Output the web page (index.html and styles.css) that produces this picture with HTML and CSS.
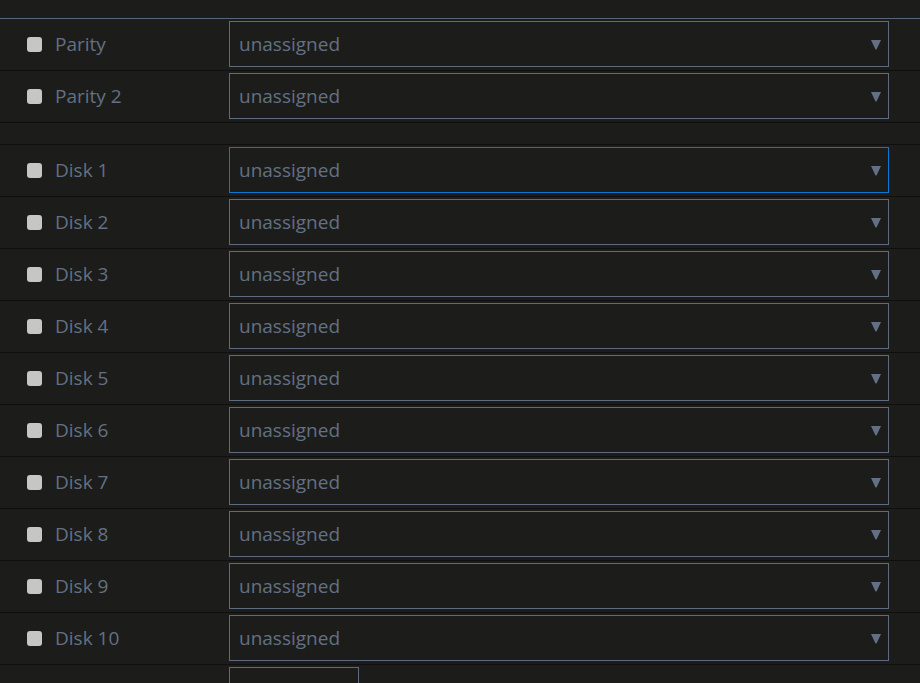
FILE: index.html
```html
<!DOCTYPE html>
<html lang="en">
<head>
    <meta charset="UTF-8">
    <title>Array Devices</title>
    <link rel="stylesheet" href="styles.css">
</head>
<body>
    <div class="devices">
        <div class="devices-head"></div>

        <div class="row">
            <div class="label"><span class="check"></span>Parity</div>
            <div class="select"><span>unassigned</span><svg class="arrow" width="10" height="10" viewBox="0 0 10 10"><polygon points="0,0 10,0 5.5,9.5 4.5,9.5"/></svg></div>
        </div>
        <div class="row">
            <div class="label"><span class="check"></span>Parity 2</div>
            <div class="select"><span>unassigned</span><svg class="arrow" width="10" height="10" viewBox="0 0 10 10"><polygon points="0,0 10,0 5.5,9.5 4.5,9.5"/></svg></div>
        </div>

        <div class="row spacer"></div>

        <div class="row">
            <div class="label"><span class="check"></span>Disk 1</div>
            <div class="select focused"><span>unassigned</span><svg class="arrow" width="10" height="10" viewBox="0 0 10 10"><polygon points="0,0 10,0 5.5,9.5 4.5,9.5"/></svg></div>
        </div>
        <div class="row">
            <div class="label"><span class="check"></span>Disk 2</div>
            <div class="select"><span>unassigned</span><svg class="arrow" width="10" height="10" viewBox="0 0 10 10"><polygon points="0,0 10,0 5.5,9.5 4.5,9.5"/></svg></div>
        </div>
        <div class="row">
            <div class="label"><span class="check"></span>Disk 3</div>
            <div class="select"><span>unassigned</span><svg class="arrow" width="10" height="10" viewBox="0 0 10 10"><polygon points="0,0 10,0 5.5,9.5 4.5,9.5"/></svg></div>
        </div>
        <div class="row">
            <div class="label"><span class="check"></span>Disk 4</div>
            <div class="select"><span>unassigned</span><svg class="arrow" width="10" height="10" viewBox="0 0 10 10"><polygon points="0,0 10,0 5.5,9.5 4.5,9.5"/></svg></div>
        </div>
        <div class="row">
            <div class="label"><span class="check"></span>Disk 5</div>
            <div class="select"><span>unassigned</span><svg class="arrow" width="10" height="10" viewBox="0 0 10 10"><polygon points="0,0 10,0 5.5,9.5 4.5,9.5"/></svg></div>
        </div>
        <div class="row">
            <div class="label"><span class="check"></span>Disk 6</div>
            <div class="select"><span>unassigned</span><svg class="arrow" width="10" height="10" viewBox="0 0 10 10"><polygon points="0,0 10,0 5.5,9.5 4.5,9.5"/></svg></div>
        </div>
        <div class="row">
            <div class="label"><span class="check"></span>Disk 7</div>
            <div class="select"><span>unassigned</span><svg class="arrow" width="10" height="10" viewBox="0 0 10 10"><polygon points="0,0 10,0 5.5,9.5 4.5,9.5"/></svg></div>
        </div>
        <div class="row">
            <div class="label"><span class="check"></span>Disk 8</div>
            <div class="select"><span>unassigned</span><svg class="arrow" width="10" height="10" viewBox="0 0 10 10"><polygon points="0,0 10,0 5.5,9.5 4.5,9.5"/></svg></div>
        </div>
        <div class="row">
            <div class="label"><span class="check"></span>Disk 9</div>
            <div class="select"><span>unassigned</span><svg class="arrow" width="10" height="10" viewBox="0 0 10 10"><polygon points="0,0 10,0 5.5,9.5 4.5,9.5"/></svg></div>
        </div>
        <div class="row">
            <div class="label"><span class="check"></span>Disk 10</div>
            <div class="select"><span>unassigned</span><svg class="arrow" width="10" height="10" viewBox="0 0 10 10"><polygon points="0,0 10,0 5.5,9.5 4.5,9.5"/></svg></div>
        </div>

        <div class="row">
            <div class="label"></div>
            <div class="slots"></div>
        </div>
    </div>
</body>
</html>
```

FILE: styles.css
```css
:root {
    --page-bg: #1c1d1b;
    --row-line: #0e0f0e;
    --head-line: #566579;
    --field-line: #5e6b7d;
    --field-focus: #0a78d2;
    --text-muted: #637083;
    --check-bg: #c6c6c6;
}

* {
    margin: 0;
    padding: 0;
    box-sizing: border-box;
}

body {
    background: var(--page-bg);
    font-family: 'Open Sans', 'Noto Sans', sans-serif;
    font-size: 19px;
    color: var(--text-muted);
    overflow: hidden;
}

.devices-head {
    height: 19px;
    border-bottom: 1px solid var(--head-line);
}

.row {
    display: flex;
    align-items: flex-start;
    height: 52px;
    padding-top: 2px;
    border-bottom: 1px solid var(--row-line);
}

.row.spacer {
    height: 22px;
    padding: 0;
}

.label {
    display: flex;
    align-items: center;
    width: 229px;
    height: 46px;
    padding-left: 27px;
}

.check {
    width: 15px;
    height: 15px;
    margin-right: 13px;
    border-radius: 3px;
    background: var(--check-bg);
}

.select {
    display: flex;
    align-items: center;
    justify-content: space-between;
    width: 660px;
    height: 46px;
    padding: 0 7px 1px 9px;
    border: 1px solid var(--field-line);
}

.select.focused {
    border-color: var(--field-focus);
}

.arrow {
    fill: var(--text-muted);
    margin-top: 2px;
}

.slots {
    width: 130px;
    height: 46px;
    border: 1px solid var(--field-line);
}
```
